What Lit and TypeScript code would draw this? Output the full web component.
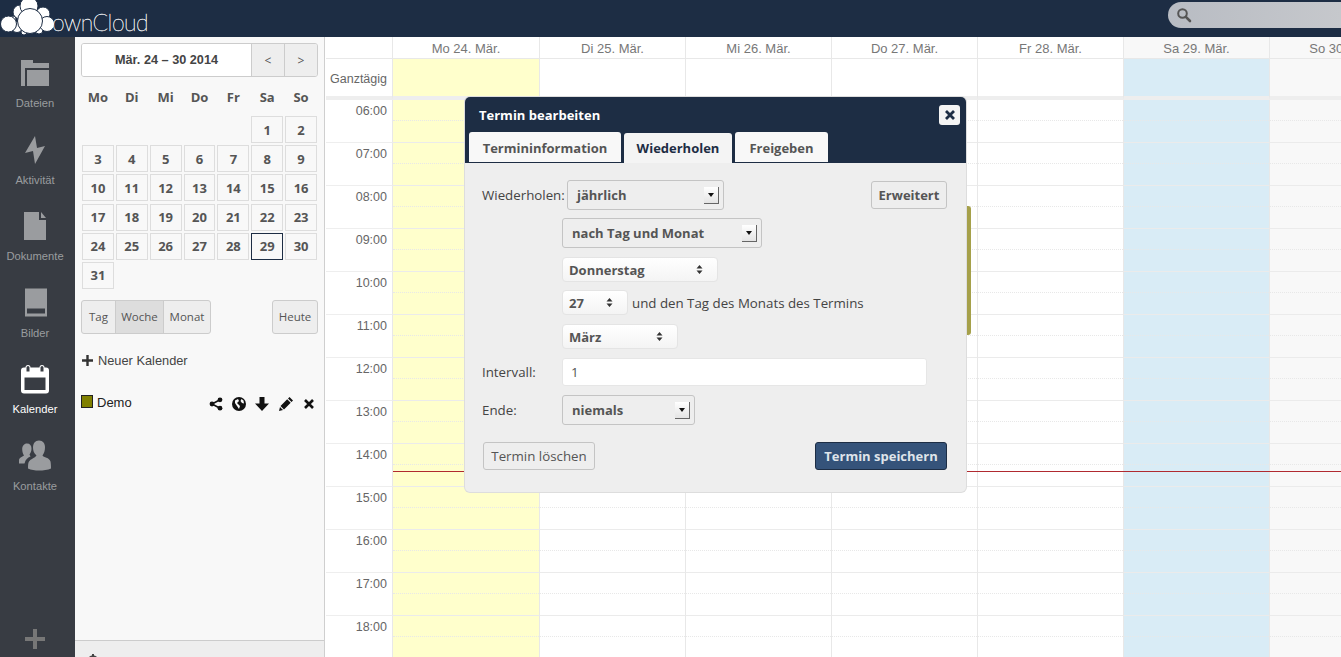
import { LitElement, html, css, svg } from "lit";
import { customElement } from "lit/decorators.js";

const navIcons: Record<string, unknown> = {
  folder: svg`<g transform="translate(0 0)"><path fill="#9a9c9f" d="M1 0h12v3h16v5H5v18H1z"/><path fill="#9a9c9f" d="M7 10h22v16H7z"/></g>`,
  bolt: svg`<g transform="translate(0 -1)"><path fill="#9a9c9f" d="M15 0 5 17l8-2 2 13 10-18-8 2z"/></g>`,
  doc: svg`<g transform="translate(0 -1)"><path fill="#9a9c9f" d="M4 0h15v8h7v20H4z"/><path fill="#9a9c9f" d="M21 0l5 6h-5z"/></g>`,
  image: svg`<g transform="translate(0 -1.500)"><path fill="#9a9c9f" d="M5 0h22v28H5z"/><path fill="#383c43" d="M7 20h18v5H7z"/></g>`,
  cal: svg`<g transform="translate(0 -1.500)"><path fill="#fff" fill-rule="evenodd" d="M4 3h1.500a2.500 2.500 0 0 1 5 0h9a2.500 2.500 0 0 1 5 0H26a3 3 0 0 1 3 3v20a3 3 0 0 1-3 3H4a3 3 0 0 1-3-3V6a3 3 0 0 1 3-3zM4.500 13v12.500h21V13z"/><path fill="#383c43" d="M6.500 3a1.500 1.500 0 0 1 3 0v4h-3zM20.500 3a1.500 1.500 0 0 1 3 0v4h-3z"/></g>`,
  people: svg`<g transform="translate(-1 -2.500)"><path fill="#9a9c9f" d="M8 3c3 0 4.500 2 4.500 5s-1 4.500-2 6l1 2c-3 1-5 3-6 7H0v-3c0-3 3-3.500 5-5-1-1.500-1.800-3.500-1.800-6.500S5 3 8 3z"/><path fill="#9a9c9f" d="M20 0c4 0 6 3 6 7 0 3-1 6-2.500 8 1 2 7 2 8 6 .3 1.500.5 4 .5 7-3 1.500-8 2-12 2s-8-.5-11-2c0-3 0-5.500 1-7 1.500-2.500 6-3.500 7.500-6C15 13 14 10 14 7c0-4 2-7 6-7z"/></g>`,
};

const navItems = [
  ["folder", "Dateien"],
  ["bolt", "Aktivität"],
  ["doc", "Dokumente"],
  ["image", "Bilder"],
  ["cal", "Kalender"],
  ["people", "Kontakte"],
];

const days = [
  ["Mo 24. Mär.", "today"],
  ["Di 25. Mär.", ""],
  ["Mi 26. Mär.", ""],
  ["Do 27. Mär.", ""],
  ["Fr 28. Mär.", ""],
  ["Sa 29. Mär.", "sat"],
  ["So 30. Mär.", "sun"],
];

const hours = ["06:00", "07:00", "08:00", "09:00", "10:00", "11:00", "12:00", "13:00", "14:00", "15:00", "16:00", "17:00", "18:00"];
const weekLabels = ["Mo", "Di", "Mi", "Do", "Fr", "Sa", "So"];

const stepper = html`<svg width="7" height="9" viewBox="0 0 7 9"><path fill="#333" d="M3.500 0 6.500 3.500h-6zM3.500 9 .5 5.500h6z"/></svg>`;
const arrow = html`<span class="arrow"></span>`;

@customElement("app-root")
export class AppRoot extends LitElement {
  static styles = css`
    :host { display: block; width: 1341px; height: 657px; overflow: hidden; position: relative; font-family: "Liberation Sans", sans-serif; background: #fff; }
    .header { height: 37px; background: #1d2d44; display: flex; align-items: flex-start; justify-content: space-between; overflow: hidden; }
    .logo { display: flex; align-items: flex-start; }
    .logo-text { font-family: "Lato", sans-serif; font-weight: 100; font-size: 23px; line-height: 30px; color: #fff; -webkit-text-stroke: .35px #fff; margin-left: -4px; margin-top: 7px; letter-spacing: -.5px; }
    .search { width: 173px; height: 26px; margin-top: 2px; border-radius: 13px 0 0 13px; background: linear-gradient(90deg, #b8bcc3, #c6c8cc); display: flex; align-items: center; padding-left: 8px; box-sizing: border-box; }
    .layout { display: flex; height: 620px; }
    .nav { width: 75px; flex: none; background: #383c43; position: relative; padding-top: 23px; box-sizing: border-box; }
    .nav-item { width: 70px; height: 76.500px; display: flex; flex-direction: column; align-items: center; color: #9a9c9f; font-size: 11.200px; }
    .nav-item svg { display: block; overflow: visible; }
    .nav-item span { margin-top: 7px; line-height: 13px; white-space: nowrap; }
    .nav-item.active { color: #fff; }
    .nav-plus { position: absolute; left: 25px; bottom: 8px; }
    .panel { width: 250px; flex: none; box-sizing: border-box; background: #f8f8f8; border-right: 1px solid #cfcfcf; position: relative; padding: 6px 6px 0; }
    .date-head { display: flex; height: 34px; border: 1px solid #ccc; border-radius: 3px; box-sizing: border-box; color: #444; overflow: hidden; }
    .date-title { flex: none; width: 169px; background: #fff; font-weight: 700; font-size: 12.700px; display: flex; align-items: center; justify-content: center; }
    .date-btn { flex: 1; background: #eee; border-left: 1px solid #ccc; display: flex; align-items: center; justify-content: center; font-family: "Open Sans", sans-serif; font-size: 12px; color: #555; }
    .week, .month { display: grid; grid-template-columns: repeat(7, 1fr); font-family: "Open Sans", sans-serif; font-weight: 700; font-size: 13px; color: #555; margin: 0 1px; column-gap: 2px; }
    .week { height: 39px; align-items: center; }
    .week span { text-align: center; }
    .month { grid-auto-rows: 27px; row-gap: 2.200px; }
    .cell { border: 1px solid #ddd; display: flex; align-items: center; justify-content: center; box-sizing: border-box; }
    .cell.cur { border-color: #1d2d44; }
    .views { display: flex; justify-content: space-between; margin-top: 11px; font-family: "Open Sans", sans-serif; font-size: 11.500px; color: #555; }
    .vgroup { display: flex; height: 34px; border: 1px solid #ccc; border-radius: 3px; box-sizing: border-box; background: #eee; overflow: hidden; }
    .vgroup span { display: flex; align-items: center; justify-content: center; box-sizing: border-box; width: 48px; border-left: 1px solid #ccc; }
    .vgroup span:first-child { border-left: 0; width: 33px; }
    .vgroup span:last-child { width: 47px; }
    .vgroup span.on { background: #ddd; }
    .today-btn { display: flex; align-items: center; justify-content: center; width: 46px; height: 34px; border: 1px solid #ccc; border-radius: 3px; background: #eee; box-sizing: border-box; }
    .new-cal { display: flex; align-items: center; gap: 5px; margin-top: 19px; font-size: 12.800px; color: #444; height: 16px; padding-left: 1px; }
    .cal-row { display: flex; align-items: center; margin-top: 26px; height: 18px; font-size: 13px; color: #222; }
    .swatch { width: 12px; height: 13px; background: #808000; border: 1px solid #222; box-sizing: border-box; margin-right: 4px; margin-bottom: 4px; }
    .cal-name { flex: 1; margin-bottom: 2px; }
    .cal-icons { display: flex; align-items: center; gap: 9px; margin-right: 4px; }
    .cal-icons svg { display: block; }
    .cal-icons .pencil { margin-left: 1px; }
    .cal-icons .cross { margin-left: 2px; }
    .settings { position: absolute; left: 0; right: 0; bottom: 0; height: 17px; box-sizing: border-box; background: #eee; border-top: 1px solid #ccc; overflow: hidden; }
    .settings svg { position: absolute; left: 11px; top: 13px; }
    .main { flex: 1; min-width: 0; position: relative; overflow: hidden; margin-left: 1px; }
    .grid { display: grid; grid-template-columns: 67px 147px repeat(6, 146px); grid-template-rows: 22px 41px repeat(13, 43px); width: 1090px; font-size: 13px; color: #666; }
    .grid > div { box-sizing: border-box; border-right: 1px solid #e8e8e8; }
    .col-head { border-bottom: 1px solid #e8e8e8; display: flex; align-items: center; justify-content: center; color: #777; padding-top: 1px; }
    .allday { border-bottom: 4px solid #eee; }
    .time-cell { display: flex; justify-content: flex-end; padding: 4px 5px 0 0; border-bottom: 1px solid #eee; font-size: 12.500px; }
    .allday.time-cell { align-items: center; padding-top: 2px; border-bottom: 4px solid #eee; }
    .slot { border-bottom: 1px solid #ebebeb; position: relative; }
    .half { height: 20px; border-bottom: 1px dotted #e8e8e8; }
    .today { background: #ffc; }
    .sat { background: #d9ecf6; }
    .sun { background: #f8f8f8; }
    .col-head.today { background: #fff; }
    .col-head.sat { background: #f8f8f8; }
    .now-line { position: absolute; left: 67px; right: 0; top: 434px; height: 1px; background: #b02a30; }
    .event { position: absolute; left: 509px; width: 136px; top: 169px; height: 129px; background: #a5a04a; border-radius: 3px; }
    .dialog { position: absolute; left: 139px; top: 60px; width: 501px; height: 395px; box-sizing: border-box; border-radius: 5px; background: #eee; box-shadow: 0 0 0 1px #ddd; font-family: "Open Sans", sans-serif; font-size: 13.300px; color: #444; overflow: hidden; }
    .d-head { height: 66px; background: #1d2d44; position: relative; box-sizing: border-box; padding: 9px 0 0 14px; }
    .d-title { color: #fff; font-weight: 700; font-size: 13px; line-height: 18px; }
    .close { position: absolute; left: 474px; top: 8px; width: 21px; height: 20px; background: #f4f4f4; border-radius: 3px; display: flex; align-items: center; justify-content: center; }
    .tabs { display: flex; position: absolute; left: 4px; top: 35px; gap: 3px; align-items: flex-start; font-size: 13px; }
    .tab { height: 30px; background: #f8f8f8; border-radius: 3px 3px 0 0; box-sizing: border-box; display: flex; align-items: center; justify-content: center; font-weight: 700; color: #555; padding-top: 2px; }
    .tab.t1 { width: 152px; }
    .tab.t2 { width: 108px; color: #1d2d44; margin-top: 1px; height: 30px; background: #f4f4f4; padding-top: 0; }
    .tab.t3 { width: 93px; }
    .d-body { padding: 17px 19px 0 17px; }
    .row { display: flex; align-items: center; }
    .lbl { width: 80px; flex: none; color: #444; }
    .lbl.tight { width: 85px; }
    .sel { position: relative; box-sizing: border-box; height: 30px; border: 1px solid #c4c4c4; border-radius: 3px; background: #eee; font-weight: 700; font-size: 13px; color: #555; display: flex; align-items: center; padding-left: 9px; }
    .arrow { position: absolute; right: 4px; top: 6px; width: 15px; height: 17px; box-sizing: border-box; background: linear-gradient(#fff, #e4e4e4); border-right: 1px solid #666; border-bottom: 1px solid #666; }
    .arrow::after { content: ""; position: absolute; left: 4px; top: 6px; border: 3px solid transparent; border-top: 4px solid #111; border-bottom: 0; }
    .pick { position: relative; box-sizing: border-box; height: 25px; border: 1px solid #e4e4e4; border-radius: 4px; background: linear-gradient(#fff, #f4f4f4); font-weight: 700; font-size: 13px; color: #555; display: flex; align-items: center; padding-left: 6px; }
    .stepper { position: absolute; top: 7px; display: block; line-height: 0; }
    .btn { box-sizing: border-box; height: 28px; border: 1px solid #c4c4c4; border-radius: 3px; background: #eee; display: flex; align-items: center; justify-content: center; color: #555; }
    .spacer { flex: 1; }
    .input { box-sizing: border-box; width: 365px; height: 28px; background: #fff; border: 1px solid #e6e6e6; border-radius: 3px; display: flex; align-items: center; padding-left: 8px; color: #555; }
    .mt8 { margin-top: 8px; }
    .mt9 { margin-top: 9px; }
    .mt17 { margin-top: 17px; }
    .after { margin-left: 4px; }
    .primary { background: #35537a; border-color: #1d2d44; color: #dfe4ea; font-weight: 700; font-size: 13px; width: 132px; }
    .erw { width: 76px; font-weight: 700; font-size: 13px; }
    .del { width: 112px; margin-left: 1px; }
  `;

  render() {
    return html`
      <div class="header">
        <div class="logo">
          <svg width="56" height="36" viewBox="0 0 56 36" fill="#fff" stroke="#1d2d44" stroke-width="1">
            <circle cx="13" cy="19" r="3"/><circle cx="39" cy="30" r="4"/><circle cx="24" cy="32" r="3"/>
            <circle cx="17" cy="27" r="5.500"/><circle cx="8.500" cy="24" r="8"/>
            <circle cx="20" cy="12" r="7"/><circle cx="43" cy="14" r="7"/>
            <circle cx="29" cy="6" r="9"/><circle cx="47" cy="24" r="7.500"/>
            <circle cx="30" cy="21" r="12.500"/>
          </svg>
          <span class="logo-text">ownCloud</span>
        </div>
        <div class="search">
          <svg width="16" height="16" viewBox="0 0 16 16"><circle cx="6.500" cy="6.500" r="4.300" fill="none" stroke="#555" stroke-width="2"/><path d="M9.800 9.800 14 14" stroke="#555" stroke-width="2.600" stroke-linecap="round"/></svg>
        </div>
      </div>
      <div class="layout">
        <nav class="nav">
          ${navItems.map(([icon, label]) => html`
            <div class="nav-item ${icon === "cal" ? "active" : ""}">
              <svg width="32" height="30" viewBox="-1 0 32 30">${navIcons[icon]}</svg>
              <span>${label}</span>
            </div>`)}
          <svg class="nav-plus" width="20" height="20" viewBox="0 0 20 20"><path fill="#777" d="M8 0h4v8h8v4h-8v8H8v-8H0V8h8z"/></svg>
        </nav>
        <aside class="panel">
          <div class="date-head">
            <div class="date-title">Mär. 24 – 30 2014</div>
            <div class="date-btn">&lt;</div>
            <div class="date-btn">&gt;</div>
          </div>
          <div class="week">${weekLabels.map((d) => html`<span>${d}</span>`)}</div>
          <div class="month">
            ${[0, 0, 0, 0, 0].map(() => html`<span></span>`)}
            ${Array.from({ length: 31 }, (_, i) => html`<div class="cell ${i + 1 === 29 ? "cur" : ""}">${i + 1}</div>`)}
          </div>
          <div class="views">
            <div class="vgroup"><span>Tag</span><span class="on">Woche</span><span>Monat</span></div>
            <div class="today-btn">Heute</div>
          </div>
          <div class="new-cal">
            <svg width="11" height="11" viewBox="0 0 11 11"><path fill="#333" d="M4.300 0h2.400v4.300H11v2.400H6.700V11H4.300V6.700H0V4.300h4.300z"/></svg>
            <span>Neuer Kalender</span>
          </div>
          <div class="cal-row">
            <span class="swatch"></span>
            <span class="cal-name">Demo</span>
            <div class="cal-icons">
              <svg width="14" height="14" viewBox="0 0 14 14"><path stroke="#111" stroke-width="1.600" fill="none" d="M11 2.800 3 7l8 4.200"/><circle cx="3" cy="7" r="2.400" fill="#111"/><circle cx="11" cy="2.800" r="2.400" fill="#111"/><circle cx="11" cy="11.200" r="2.400" fill="#111"/></svg>
              <svg width="14" height="14" viewBox="0 0 14 14"><circle cx="7" cy="7" r="7" fill="#111"/><path fill="#f8f8f8" d="M3 3.500 6 2 7 4 5 6l1.500 1.500L8 9l-1 3-2-3-2-3zM9.500 2l2 1.500.5 3-2-.5-1.500-2z"/></svg>
              <svg width="14" height="14" viewBox="0 0 14 14"><path fill="#111" d="M4.500 0h5v6.500H14L7 14 0 6.500h4.500z"/></svg>
              <svg class="pencil" width="14" height="14" viewBox="0 0 14 14"><path fill="#111" d="M10.500 0 14 3.500 12.500 5 9 1.500zM8.200 2.300l3.500 3.500L5 12.500 1.500 9zM1 10l3 3-4 1z"/></svg>
              <svg class="cross" width="10" height="10" viewBox="0 0 10 10"><path stroke="#111" stroke-width="2.600" d="m1 1 8 8M9 1l-8 8"/></svg>
            </div>
          </div>
          <div class="settings">
            <svg width="14" height="14" viewBox="0 0 14 14"><circle cx="7" cy="7" r="4.500" fill="none" stroke="#444" stroke-width="2.500"/><path stroke="#444" stroke-width="2" d="M7 0v14M0 7h14"/></svg>
          </div>
        </aside>
        <main class="main">
          <div class="grid">
            <div class="col-head"></div>
            ${days.map(([label, c]) => html`<div class="col-head ${c}">${label}</div>`)}
            <div class="allday time-cell">Ganztägig</div>
            ${days.map(([, c]) => html`<div class="allday ${c}"></div>`)}
            ${hours.map((h) => html`
              <div class="time-cell">${h}</div>
              ${days.map(([, c]) => html`<div class="slot ${c}"><div class="half"></div></div>`)}
            `)}
          </div>
          <div class="event"></div>
          <div class="now-line"></div>
          <section class="dialog">
            <div class="d-head">
              <div class="d-title">Termin bearbeiten</div>
              <div class="close"><svg width="10" height="10" viewBox="0 0 10 10"><path stroke="#1d2d44" stroke-width="2.800" d="m1 1 8 8M9 1l-8 8"/></svg></div>
              <div class="tabs">
                <div class="tab t1">Termininformation</div>
                <div class="tab t2">Wiederholen</div>
                <div class="tab t3">Freigeben</div>
              </div>
            </div>
            <div class="d-body">
              <div class="row">
                <span class="lbl tight">Wiederholen:</span>
                <div class="sel" style="width:157px">jährlich${arrow}</div>
                <span class="spacer"></span>
                <div class="btn erw">Erweitert</div>
              </div>
              <div class="row mt8"><span class="lbl"></span><div class="sel" style="width:200px">nach Tag und Monat${arrow}</div></div>
              <div class="row mt9"><span class="lbl"></span><div class="pick" style="width:156px">Donnerstag<span class="stepper" style="left:133px">${stepper}</span></div></div>
              <div class="row mt8"><span class="lbl"></span><div class="pick" style="width:66px">27<span class="stepper" style="left:43px">${stepper}</span></div><span class="after">und den Tag des Monats des Termins</span></div>
              <div class="row mt9"><span class="lbl"></span><div class="pick" style="width:116px">März<span class="stepper" style="left:93px">${stepper}</span></div></div>
              <div class="row mt9"><span class="lbl">Intervall:</span><div class="input">1</div></div>
              <div class="row mt9"><span class="lbl">Ende:</span><div class="sel" style="width:133px">niemals${arrow}</div></div>
              <div class="row mt17"><div class="btn del">Termin löschen</div><span class="spacer"></span><div class="btn primary">Termin speichern</div></div>
            </div>
          </section>
        </main>
      </div>
    `;
  }
}
